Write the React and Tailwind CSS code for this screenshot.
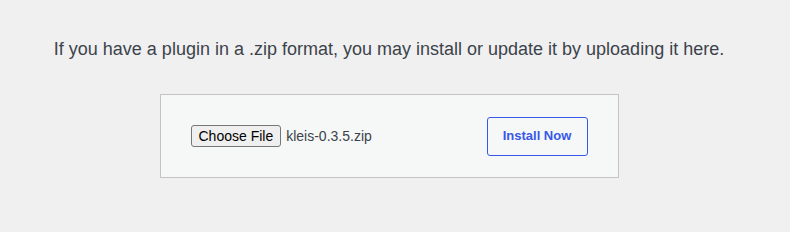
export default function App() {
  return (
    <div className="min-h-[232px] w-full bg-[#f0f0f1] pr-3 font-['Liberation_Sans',Arial,sans-serif] text-[#3c434a]">
      <div className="flex flex-col items-center pt-[38px]">
        <p className="text-[18px] leading-[22px]">
          If you have a plugin in a .zip format, you may install or update it by uploading it here.
        </p>
        <div className="mt-[34px] flex h-[84px] w-[459px] items-center justify-between border border-[#c3c4c7] bg-[#f6f7f7] pl-[30px] pr-[30px]">
          <div className="flex items-center">
            <button className="h-[22px] rounded-[3px] border border-[#767676] bg-[#efefef] px-[7px] text-[14px] leading-5 text-black">
              Choose File
            </button>
            <span className="ml-[5px] text-[14px] text-[#3c434a]">kleis-0.3.5.zip</span>
          </div>
          <button className="h-[39px] w-[101px] rounded-[3px] border border-[#3858e9] bg-[#f6f7f7] text-[13px] font-semibold text-[#3858e9]">
            Install Now
          </button>
        </div>
      </div>
    </div>
  );
}
